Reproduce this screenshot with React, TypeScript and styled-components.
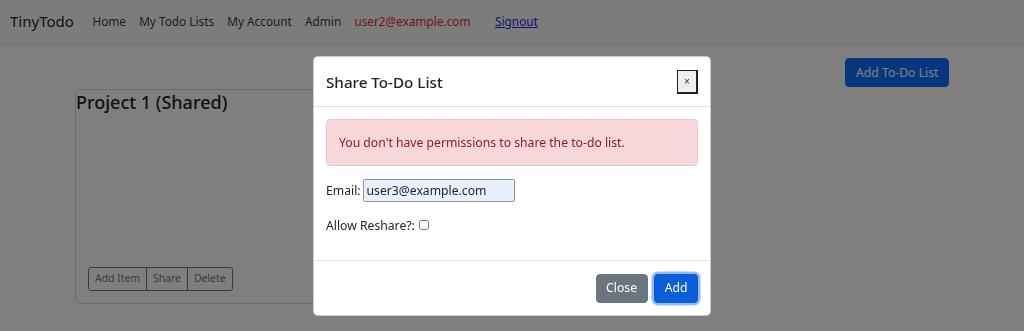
import React, { FC } from 'react';
import styled, { createGlobalStyle } from 'styled-components';

const GlobalStyle = createGlobalStyle`
  html, body {
    margin: 0;
    padding: 0;
    background: #ffffff;
  }

  body {
    font-family: "Noto Sans", "Open Sans", Arial, sans-serif;
    font-size: 12.2px;
    line-height: 19.2px;
    color: #212529;
  }

  * {
    box-sizing: border-box;
  }
`;

const Page = styled.div`
  min-height: 331px;
  background: #ffffff;
`;

const Navbar = styled.nav`
  display: flex;
  align-items: center;
  height: 45px;
  padding: 0 10px;
  background: #f8f9fa;
  border-bottom: 1px solid #eceef0;
`;

const Brand = styled.a`
  font-size: 15px;
  color: rgba(0, 0, 0, 0.9);
  margin-right: 12px;
  text-decoration: none;
`;

const NavLink = styled.a`
  padding: 0 6.6px;
  font-size: 11.8px;
  color: rgba(0, 0, 0, 0.8);
  text-decoration: none;
`;

const UserEmail = styled.span`
  padding: 0 6.6px;
  font-size: 11.8px;
  color: #e8222e;
`;

const SignoutLink = styled.a`
  margin-left: 18px;
  font-size: 11.8px;
  color: #1f24d6;
  text-decoration: underline;
`;

const Main = styled.main`
  display: flex;
  flex-direction: column;
  padding: 13px 75px 0;
`;

const Toolbar = styled.div`
  display: flex;
  justify-content: flex-end;
  margin-bottom: 2px;
`;

const PrimaryButton = styled.button`
  height: 29px;
  padding: 0 9.6px;
  font: inherit;
  color: #ffffff;
  background: #0d6efd;
  border: 1px solid #0d6efd;
  border-radius: 4px;
`;

const ListCard = styled.section`
  display: flex;
  flex-direction: column;
  justify-content: space-between;
  width: 420px;
  height: 215px;
  padding: 0 13px 12px 0;
  border: 1px solid rgba(0, 0, 0, 0.15);
  border-radius: 5px;
`;

const CardTitle = styled.h3`
  margin: 0;
  font-size: 18px;
  font-weight: 500;
  line-height: 1.35;
  color: #212529;
`;

const ButtonGroup = styled.div`
  display: flex;
  align-self: flex-start;
  margin-left: 12px;
`;

const GroupButton = styled.button<{ $first?: boolean; $last?: boolean }>`
  height: 24px;
  padding: 0 6px;
  font: inherit;
  font-size: 10.4px;
  color: #6c757d;
  background: transparent;
  border: 1px solid #6c757d;
  margin-left: ${({ $first }) => ($first ? '0' : '-1px')};
  border-radius: ${({ $first, $last }) =>
    $first ? '3px 0 0 3px' : $last ? '0 3px 3px 0' : '0'};
`;

const Backdrop = styled.div`
  position: fixed;
  inset: 0;
  background: rgba(0, 0, 0, 0.5);
`;

const ModalLayer = styled.div`
  position: fixed;
  inset: 0;
  display: flex;
  justify-content: center;
  align-items: flex-start;
  padding-top: 56px;
`;

const Modal = styled.div`
  width: 398px;
  background: #ffffff;
  border: 1px solid rgba(0, 0, 0, 0.2);
  border-radius: 5px;
  overflow: hidden;
`;

const ModalHeader = styled.div`
  display: flex;
  align-items: center;
  justify-content: space-between;
  height: 50px;
  padding: 0 12px;
  border-bottom: 1px solid #dee2e6;
`;

const ModalTitle = styled.h5`
  margin: 0;
  font-size: 15.2px;
  font-weight: 500;
  line-height: 24px;
`;

const CloseX = styled.button`
  width: 21px;
  height: 24px;
  padding: 0;
  font-family: Arial, sans-serif;
  font-size: 10px;
  color: #333333;
  background: #efefef;
  border: 1px solid #222222;
  border-right-width: 2px;
  border-bottom-width: 2px;
`;

const ModalBody = styled.div`
  display: flex;
  flex-direction: column;
  gap: 14px;
  padding: 12px 12px 25px;
`;

const Alert = styled.div`
  padding: 12.8px 12px;
  color: #842029;
  background: #f8d7da;
  border: 1px solid #f5c2c7;
  border-radius: 4px;
  margin-bottom: -1px;
`;

const FieldRow = styled.label`
  display: flex;
  align-items: center;
  gap: 2px;
`;

const EmailInput = styled.input`
  width: 152px;
  height: 23px;
  padding: 0 3px;
  font: inherit;
  color: #212529;
  background: #e8f0fe;
  border: 1px solid #8f959c;
  border-radius: 2px;
`;

const CheckBox = styled.input`
  width: 10px;
  height: 10px;
  margin: 0 0 0 2px;
`;

const ModalFooter = styled.div`
  display: flex;
  justify-content: flex-end;
  align-items: center;
  gap: 6.4px;
  height: 55px;
  padding: 0 12px;
  border-top: 1px solid #dee2e6;
`;

const FooterButton = styled.button<{ $variant: 'secondary' | 'primary' }>`
  height: 29px;
  padding: 0 9.6px;
  font: inherit;
  color: #ffffff;
  border-radius: 4px;
  background: ${({ $variant }) => ($variant === 'primary' ? '#0b5ed7' : '#6c757d')};
  border: 1px solid ${({ $variant }) => ($variant === 'primary' ? '#0a58ca' : '#6c757d')};
  box-shadow: ${({ $variant }) =>
    $variant === 'primary' ? '0 0 0 2.5px rgba(49, 132, 253, 0.55)' : 'none'};
`;

const navItems = ['Home', 'My Todo Lists', 'My Account', 'Admin'];

const ShareModal: FC = () => (
  <ModalLayer>
    <Modal>
      <ModalHeader>
        <ModalTitle>Share To-Do List</ModalTitle>
        <CloseX type="button">×</CloseX>
      </ModalHeader>
      <ModalBody>
        <Alert>You don&apos;t have permissions to share the to-do list.</Alert>
        <FieldRow>
          Email:
          <EmailInput type="text" defaultValue="user3@example.com" />
        </FieldRow>
        <FieldRow>
          Allow Reshare?:
          <CheckBox type="checkbox" />
        </FieldRow>
      </ModalBody>
      <ModalFooter>
        <FooterButton $variant="secondary">Close</FooterButton>
        <FooterButton $variant="primary">Add</FooterButton>
      </ModalFooter>
    </Modal>
  </ModalLayer>
);

const App: FC = () => (
  <>
    <GlobalStyle />
    <Page>
      <Navbar>
        <Brand href="#">TinyTodo</Brand>
        {navItems.map((item) => (
          <NavLink key={item} href="#">
            {item}
          </NavLink>
        ))}
        <UserEmail>user2@example.com</UserEmail>
        <SignoutLink href="#">Signout</SignoutLink>
      </Navbar>
      <Main>
        <Toolbar>
          <PrimaryButton>Add To-Do List</PrimaryButton>
        </Toolbar>
        <ListCard>
          <CardTitle>Project 1 (Shared)</CardTitle>
          <ButtonGroup>
            <GroupButton $first>Add Item</GroupButton>
            <GroupButton>Share</GroupButton>
            <GroupButton $last>Delete</GroupButton>
          </ButtonGroup>
        </ListCard>
      </Main>
    </Page>
    <Backdrop />
    <ShareModal />
  </>
);

export default App;
